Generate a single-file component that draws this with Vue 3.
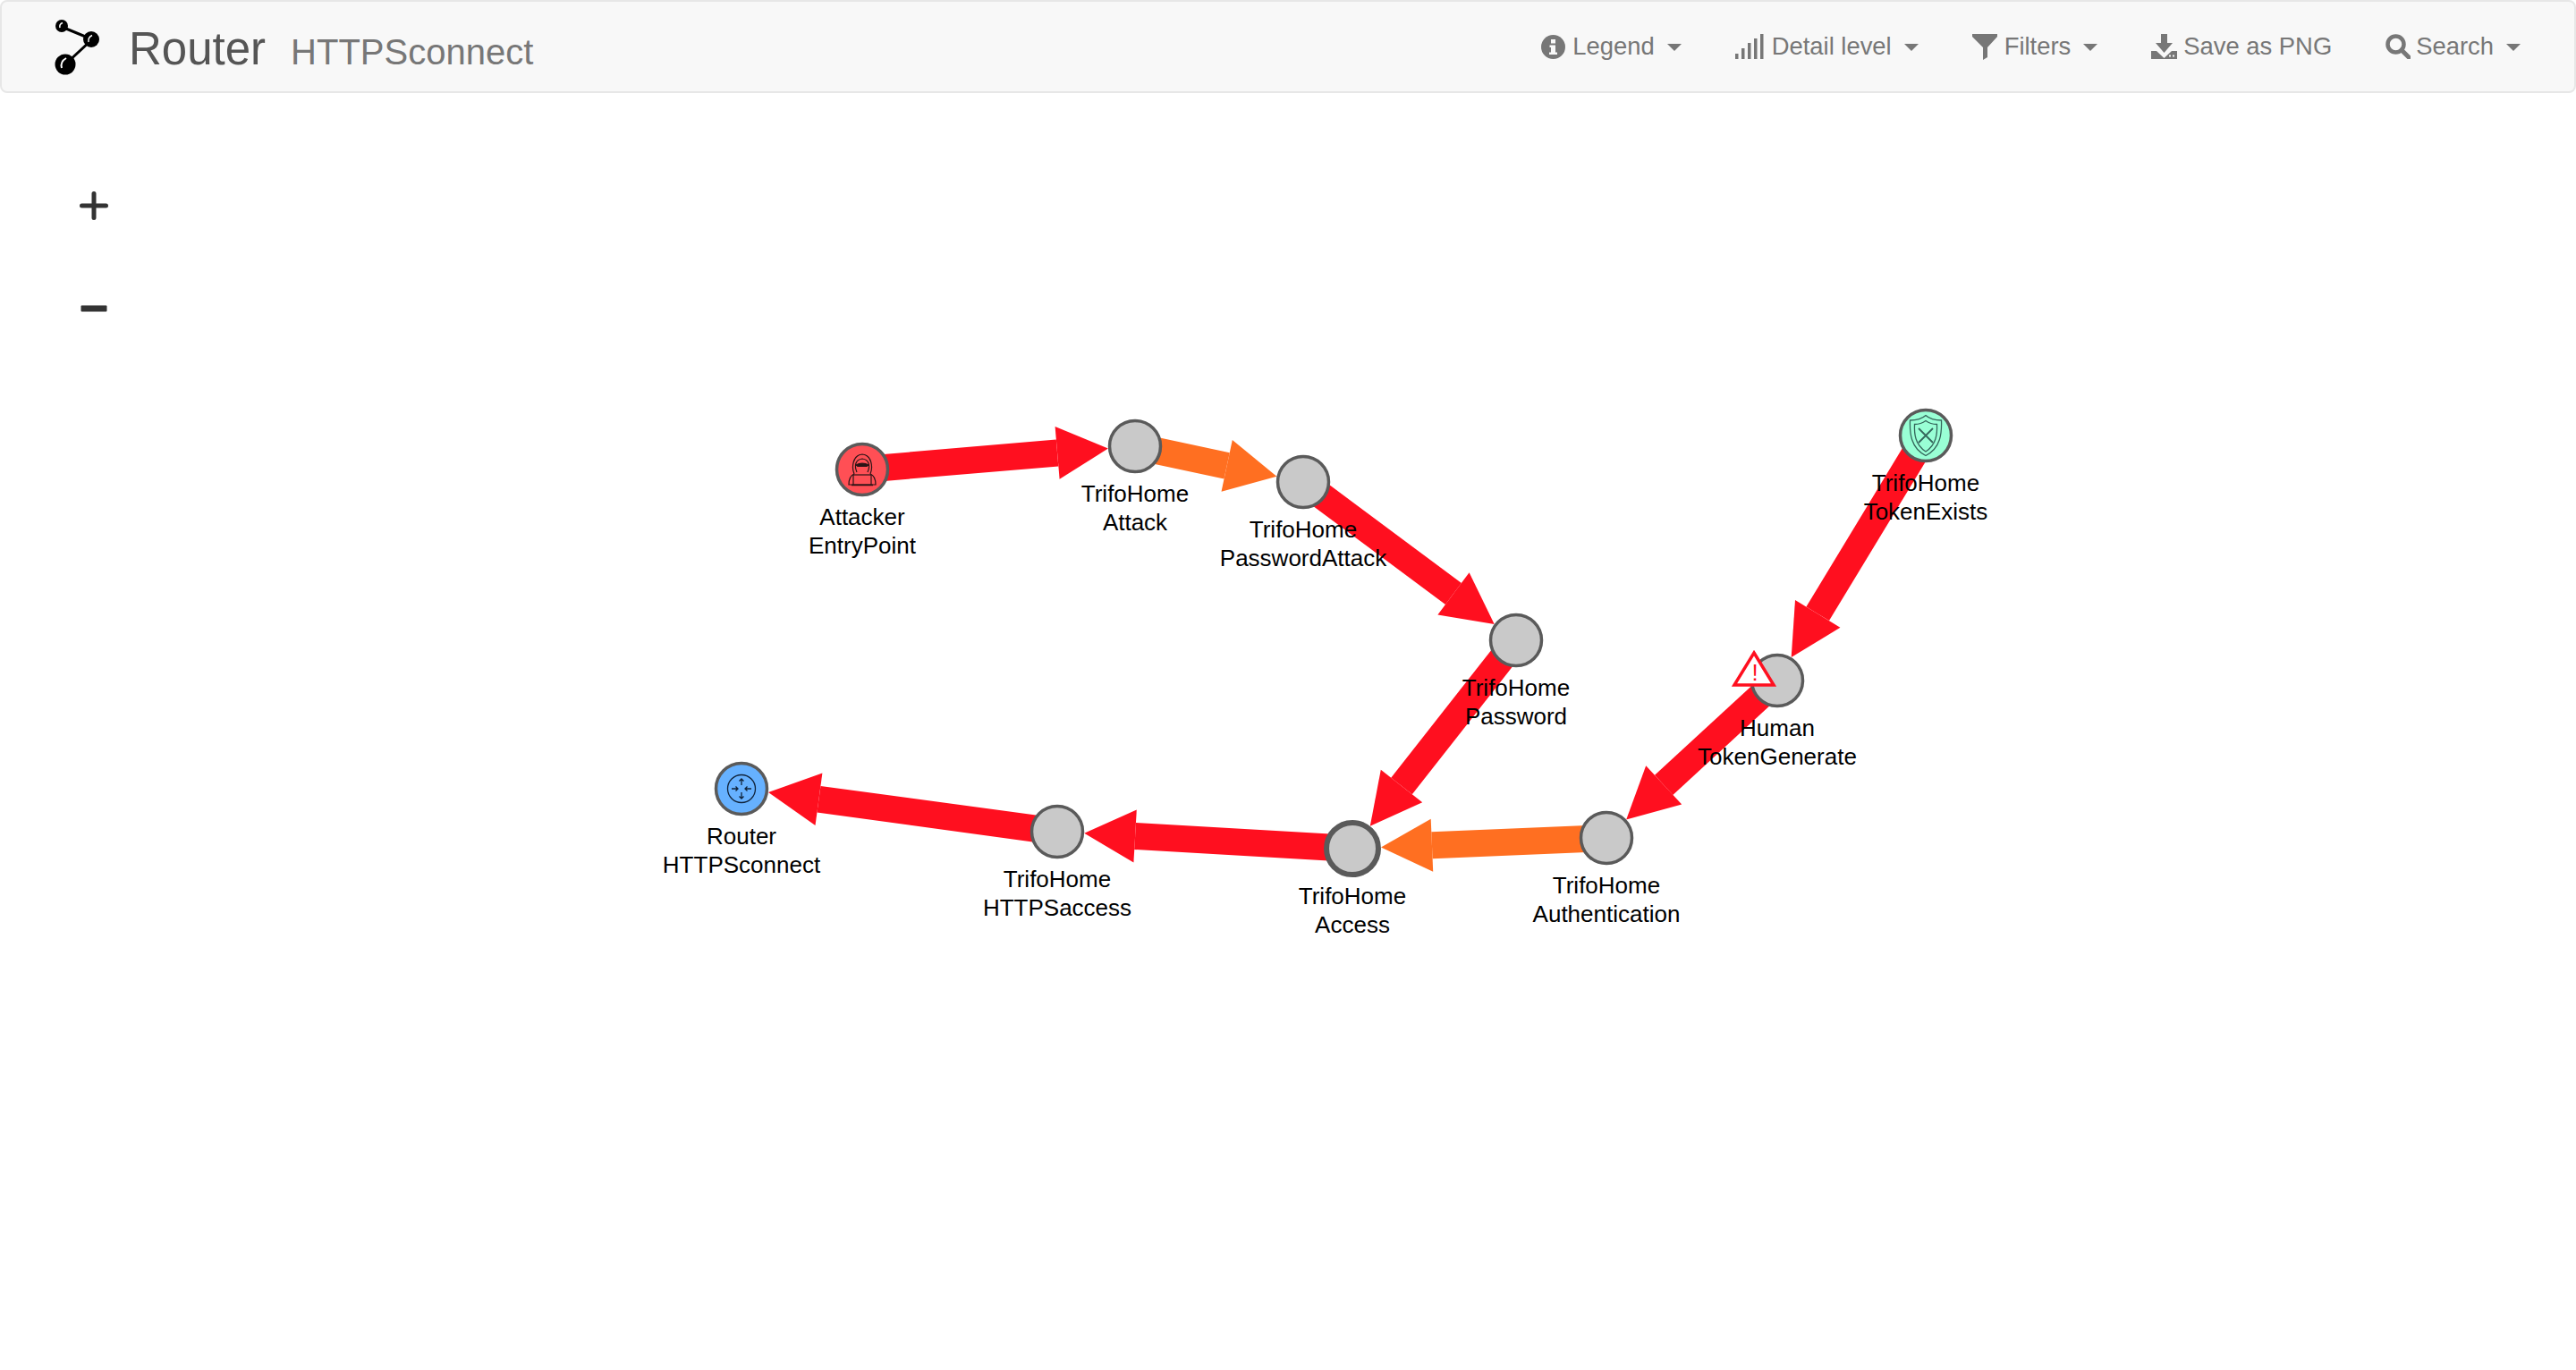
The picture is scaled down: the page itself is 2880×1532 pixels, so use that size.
<template>
  <div class="page">
    <nav class="navbar">
      <div class="brand">
        <svg class="logo" width="70" height="74" viewBox="0 0 70 74">
          <path d="M20 14 L54 28 L24 56" fill="none" stroke="#000" stroke-width="3" />
          <circle cx="20" cy="13" r="7" fill="#000" />
          <circle cx="53" cy="28" r="9" fill="#000" />
          <circle cx="24" cy="56" r="11.5" fill="#000" />
          <path d="M18 15 Q17 11 21 9.5" fill="none" stroke="#fff" stroke-width="1.5" />
          <path d="M50 31 Q49 26 54 23.5" fill="none" stroke="#fff" stroke-width="1.5" />
          <path d="M20 60 Q18 53 25 49" fill="none" stroke="#fff" stroke-width="2" />
        </svg>
        <div class="brand-text">
          <span class="brand-name">Router</span>
          <span class="brand-sub">HTTPSconnect</span>
        </div>
      </div>
      <ul class="nav">
        <li>
          <svg class="ico" width="27" height="27" viewBox="0 0 27 27">
            <circle cx="13.5" cy="13.5" r="13.5" fill="#777" />
            <rect x="11" y="5" width="5" height="4.5" fill="#f8f8f8" />
            <path d="M9.5 11.5h6.5v8h2v2.500h-9v-2.500h2v-5.500h-1.500z" fill="#f8f8f8" />
          </svg>
          <span>Legend</span><i class="caret"></i>
        </li>
        <li>
          <svg class="ico" width="33" height="28" viewBox="0 0 33 28">
            <rect x="0" y="22" width="3.500" height="6" fill="#777" />
            <rect x="7" y="16" width="3.500" height="12" fill="#777" />
            <rect x="14" y="10" width="3.500" height="18" fill="#777" />
            <rect x="21" y="5" width="3.500" height="23" fill="#777" />
            <rect x="28" y="0" width="3.500" height="28" fill="#777" />
          </svg>
          <span>Detail level</span><i class="caret"></i>
        </li>
        <li>
          <svg class="ico" width="28" height="29" viewBox="0 0 28 29">
            <path d="M0 0h28v3L17 15v11l-5 3V15L0 3z" fill="#777" />
          </svg>
          <span>Filters</span><i class="caret"></i>
        </li>
        <li>
          <svg class="ico ico-save" width="29" height="28" viewBox="0 0 29 28">
            <path d="M11 0h7v10h6L14.500 21 5 10h6z" fill="#777" />
            <path d="M0 19h6l8.500 8 8.500-8h6v9H0z" fill="#777" />
            <rect x="20" y="23.500" width="2" height="2" fill="#f8f8f8" />
            <rect x="24" y="23.500" width="2" height="2" fill="#f8f8f8" />
          </svg>
          <span>Save as PNG</span>
        </li>
        <li>
          <svg class="ico ico-search" width="28" height="28" viewBox="0 0 28 28">
            <circle cx="11.500" cy="11.500" r="9" fill="none" stroke="#777" stroke-width="4.500" />
            <path d="M18 18l8 8" stroke="#777" stroke-width="5" stroke-linecap="round" />
          </svg>
          <span>Search</span><i class="caret"></i>
        </li>
      </ul>
    </nav>

    <div class="graph">
      <div class="zoom-btns">
        <svg width="36" height="36" viewBox="0 0 36 36">
          <path d="M4.500 18H31.500M18 4.500V31.500" stroke="#333" stroke-width="5" stroke-linecap="round" />
        </svg>
        <svg width="36" height="36" viewBox="0 0 36 36">
          <rect x="3.500" y="14.500" width="29" height="7" rx="1" fill="#333" />
        </svg>
      </div>

      <svg class="canvas" width="2880" height="1428" viewBox="0 104 2880 1428">
        <g v-for="e in edgeShapes" :key="e.id" :fill="e.color">
          <polygon :points="e.shaft" />
          <polygon :points="e.head" />
        </g>

        <g v-for="n in nodes" :key="n.id" :transform="`translate(${n.x} ${n.y})`">
          <circle :r="n.r || 28.5" :fill="n.fill || '#c9c9c9'" stroke="#5a5a5a" :stroke-width="n.sw || 3.5" />

          <g v-if="n.icon === 'hacker'" fill="none" stroke="#2a1416" stroke-width="1.200">
            <path d="M-9 5C-12 -2 -11 -16 0 -17C11 -16 12 -2 9 5" />
            <path d="M-6 3C-9 -4 -8 -11 0 -12C8 -11 9 -4 6 3" />
            <path d="M-7 -5C-3 -7.500 3 -7.500 7 -5L5 -3.500H-5Z" fill="#2a1416" />
            <path d="M-9 5C-14 7 -15 11 -15 17H-10M9 5C14 7 15 11 15 17H10" />
            <rect x="-10" y="6" width="20" height="11" />
            <path d="M-12 17.500H12" stroke-width="1.500" />
          </g>

          <g v-if="n.icon === 'shield'" fill="none" stroke="#35665b" stroke-width="1.300">
            <path d="M0 -22.500C-5 -18 -11 -17 -17.500 -17C-18 -3 -17 14 0 22.500C17 14 18 -3 17.500 -17C11 -17 5 -18 0 -22.500Z" />
            <path d="M0 -16.500C-4 -13.500 -8 -12.500 -12.500 -12.500C-13 -2 -12 10 0 18C12 10 13 -2 12.500 -12.500C8 -12.500 4 -13.500 0 -16.500Z" />
            <path d="M-8 -8L8 8M8 -8L-8 8" stroke-width="1.800" />
          </g>

          <g v-if="n.icon === 'router'" fill="none" stroke="#10233a" stroke-width="1.300">
            <circle r="15.500" />
            <path d="M0 -11V-4M-2.500 -8.500L0 -11L2.500 -8.500" />
            <path d="M0 11V4M-2.500 8.500L0 11L2.500 8.500" />
            <path d="M-11 0H-4M-6.500 -2.500L-4 0L-6.500 2.500" />
            <path d="M11 0H4M6.500 -2.500L4 0L6.500 2.500" />
          </g>
        </g>

        <g class="warning" transform="translate(1961 728)">
          <polygon points="0,2 22,38 -22,38" fill="#fff" stroke="#ff0f1f" stroke-width="3.500" />
          <text x="1" y="33" class="warn-mark">!</text>
        </g>

        <g v-for="n in nodes" :key="n.id + '-label'">
          <text class="label" :x="n.x" :y="n.y + 62">{{ n.top }}</text>
          <text class="label" :x="n.x" :y="n.y + 94">{{ n.bottom }}</text>
        </g>
      </svg>
    </div>
  </div>
</template>

<script setup>
import { computed } from 'vue'

const RED = '#ff0f1f'
const ORANGE = '#ff6f21'

const nodes = [
  { id: 'attacker', x: 964, y: 525, top: 'Attacker', bottom: 'EntryPoint', fill: '#ff4f55', icon: 'hacker' },
  { id: 'attack', x: 1269, y: 499, top: 'TrifoHome', bottom: 'Attack' },
  { id: 'pwattack', x: 1457, y: 539, top: 'TrifoHome', bottom: 'PasswordAttack' },
  { id: 'password', x: 1695, y: 716, top: 'TrifoHome', bottom: 'Password' },
  { id: 'tokenexists', x: 2153, y: 487, top: 'TrifoHome', bottom: 'TokenExists', fill: '#99ffd5', icon: 'shield' },
  { id: 'tokengen', x: 1987, y: 761, top: 'Human', bottom: 'TokenGenerate' },
  { id: 'auth', x: 1796, y: 937, top: 'TrifoHome', bottom: 'Authentication' },
  { id: 'access', x: 1512, y: 949, top: 'TrifoHome', bottom: 'Access', r: 29, sw: 6 },
  { id: 'httpsaccess', x: 1182, y: 930, top: 'TrifoHome', bottom: 'HTTPSaccess' },
  { id: 'router', x: 829, y: 882, top: 'Router', bottom: 'HTTPSconnect', fill: '#66b1ff', icon: 'router' }
]

const edges = [
  ['attacker', 'attack', RED],
  ['attack', 'pwattack', ORANGE],
  ['pwattack', 'password', RED],
  ['password', 'access', RED],
  ['tokenexists', 'tokengen', RED],
  ['tokengen', 'auth', RED],
  ['auth', 'access', ORANGE],
  ['access', 'httpsaccess', RED],
  ['httpsaccess', 'router', RED]
]

function pts(list) {
  return list.map(p => p[0].toFixed(1) + ',' + p[1].toFixed(1)).join(' ')
}

// shaft runs from the source centre to the head's base, tip stops on the target's rim
const edgeShapes = computed(() => edges.map(([from, to, color]) => {
  const a = nodes.find(n => n.id === from)
  const b = nodes.find(n => n.id === to)
  const dx = b.x - a.x
  const dy = b.y - a.y
  const len = Math.hypot(dx, dy)
  const ux = dx / len
  const uy = dy / len
  const nx = -uy
  const ny = ux
  const rim = (b.r || 28.5) + (b.sw || 3.5) / 2
  const tip = [b.x - ux * rim, b.y - uy * rim]
  const base = [tip[0] - ux * 57, tip[1] - uy * 57]
  const hw = 29.5
  const sw = 15
  return {
    id: from + to,
    color,
    shaft: pts([
      [a.x + nx * sw, a.y + ny * sw],
      [base[0] + nx * sw, base[1] + ny * sw],
      [base[0] - nx * sw, base[1] - ny * sw],
      [a.x - nx * sw, a.y - ny * sw]
    ]),
    head: pts([
      tip,
      [base[0] + nx * hw, base[1] + ny * hw],
      [base[0] - nx * hw, base[1] - ny * hw]
    ])
  }
}))
</script>

<style>
html, body { margin: 0; background: #fff; overflow: hidden; }
</style>

<style scoped>
.page { width: 2880px; height: 1532px; display: flex; flex-direction: column; font-family: "Liberation Sans", Arial, sans-serif; }
.navbar { box-sizing: border-box; height: 104px; flex: none; display: flex; justify-content: space-between; align-items: center; background: #f8f8f8; border: 2px solid #e7e7e7; border-radius: 8px; }
.brand { display: flex; align-items: center; padding-left: 47px; }
.logo { margin-right: 25px; margin-top: 2px; }
.brand-text { display: flex; align-items: baseline; padding-top: 5px; }
.brand-name { font-size: 51px; color: #555; margin-right: 28px; }
.brand-sub { font-size: 40px; color: #777; }
.nav { list-style: none; margin: 0 30px 0 0; padding: 0; display: flex; align-items: center; font-size: 27.4px; color: #777; }
.nav li { display: flex; align-items: center; padding: 0 30px; }
.ico { margin-right: 8px; flex: none; }
.ico-save { margin-right: 7px; }
.ico-search { margin-right: 6px; }
.caret { width: 0; height: 0; margin-left: 14px; margin-top: 2px; border-top: 8px solid #777; border-left: 8px solid transparent; border-right: 8px solid transparent; }
.graph { position: relative; flex: 1; overflow: hidden; }
.canvas { display: block; }
.zoom-btns { position: absolute; left: 87px; top: 108px; display: flex; flex-direction: column; gap: 79px; }
.label { font-size: 26px; fill: #000; text-anchor: middle; }
.warn-mark { font-size: 26px; fill: #ff0f1f; text-anchor: middle; }
</style>
